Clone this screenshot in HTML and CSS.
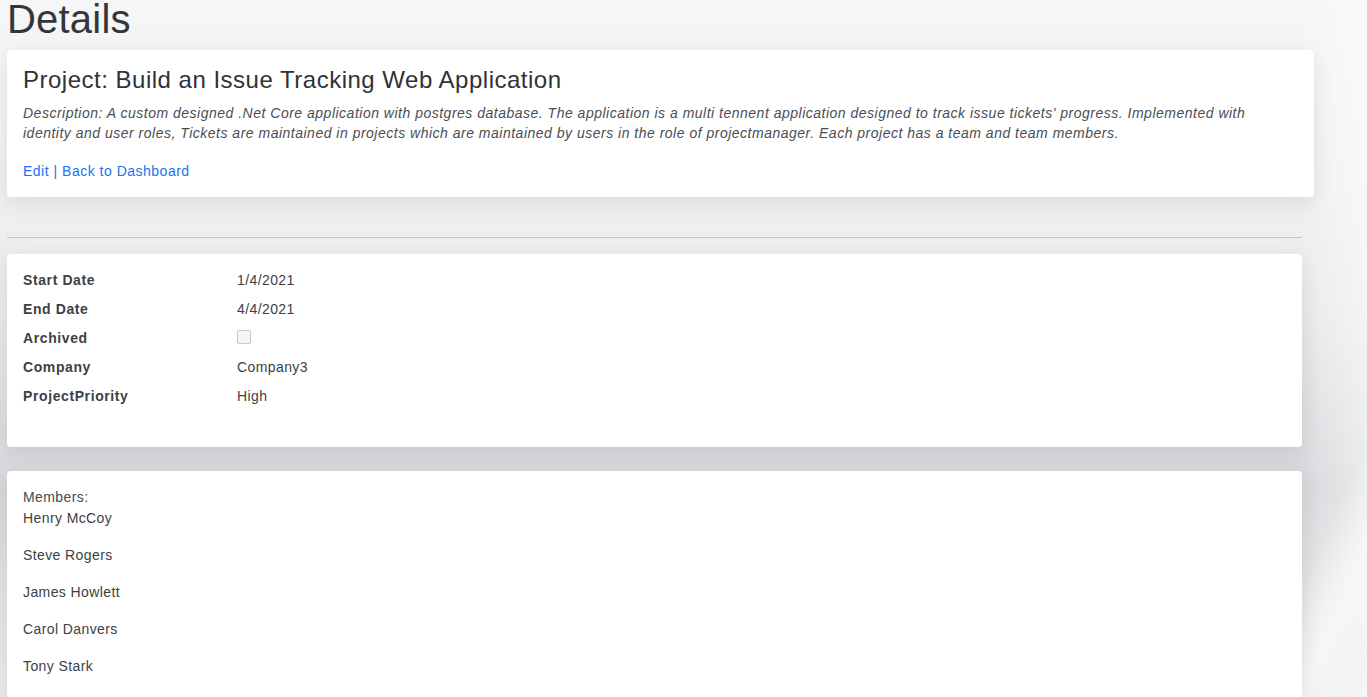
FILE: index.html
```html
<!DOCTYPE html>
<html lang="en">
<head>
<meta charset="utf-8">
<title>Details</title>
<link rel="stylesheet" href="styles.css">
</head>
<body>
<main class="page">
  <h1 class="page-title">Details</h1>

  <section class="card card-wide">
    <h4 class="project-title">Project: Build an Issue Tracking Web Application</h4>
    <p class="project-desc">Description: A custom designed .Net Core application with postgres database. The application is a multi tennent application designed to track issue tickets' progress. Implemented with identity and user roles, Tickets are maintained in projects which are maintained by users in the role of projectmanager. Each project has a team and team members.</p>
    <div class="links"><a href="#">Edit</a> | <a href="#">Back to Dashboard</a></div>
  </section>

  <hr class="divider">

  <section class="card card-details">
    <dl class="details">
      <dt>Start Date</dt><dd>1/4/2021</dd>
      <dt>End Date</dt><dd>4/4/2021</dd>
      <dt>Archived</dt><dd><span class="checkbox"></span></dd>
      <dt>Company</dt><dd>Company3</dd>
      <dt>ProjectPriority</dt><dd>High</dd>
    </dl>
  </section>

  <section class="card card-members">
    <div class="members-label">Members:</div>
    <p class="member">Henry McCoy</p>
    <p class="member">Steve Rogers</p>
    <p class="member">James Howlett</p>
    <p class="member">Carol Danvers</p>
    <p class="member">Tony Stark</p>
  </section>
</main>
</body>
</html>
```

FILE: styles.css
```css
html, body {
  margin: 0;
  padding: 0;
  height: 100%;
  overflow: hidden;
}

body {
  font-family: "Liberation Sans", Arial, sans-serif;
  font-size: 14px;
  line-height: 21px;
  color: #3b3f44;
  letter-spacing: 0.4px;
  background:
    linear-gradient(115deg, rgba(255,255,255,0) 0%, rgba(255,255,255,0) 93%, rgba(255,255,255,0.55) 96%, rgba(255,255,255,0) 99%),
    linear-gradient(90deg, rgba(255,255,255,0) 0%, rgba(255,255,255,0) 95%, rgba(255,255,255,0.5) 100%),
    linear-gradient(180deg, #f6f6f7 0%, #f1f1f2 25%, #e9eaeb 45%, #d8dadd 66%, #d5d7da 70%, #e3e4e6 85%, #ebecee 100%);
}

.page {
  width: 1295px;
  padding-left: 7px;
}

.page-title {
  margin: 0 0 11px;
  font-size: 40px;
  line-height: 39px;
  font-weight: 400;
  color: #33373b;
  letter-spacing: 0.2px;
}

.card {
  background: #fff;
  border-radius: 4px;
  box-shadow: 0 6px 22px rgba(0, 0, 0, 0.09);
  padding: 16px;
}

.card-wide {
  margin-right: -12px;
  padding-bottom: 15px;
}

.project-title {
  margin: 0 0 8px;
  font-size: 24px;
  line-height: 28.8px;
  font-weight: 400;
  color: #2f3338;
  letter-spacing: 0.5px;
}

.project-desc {
  margin: 0 0 18px;
  font-size: 14px;
  line-height: 20px;
  font-style: italic;
  color: #4a4e53;
  letter-spacing: 0.5px;
}

.links {
  color: #1a73f0;
  letter-spacing: 0.5px;
}

.links a {
  color: #1a73f0;
  text-decoration: none;
}

.divider {
  margin: 40px 0 16px;
  border: 0;
  border-top: 1px solid #c4c5c7;
}

.card-details {
  padding-bottom: 16px;
  margin-bottom: 24px;
}

.details {
  display: grid;
  grid-template-columns: 214px 1fr;
  margin: 0 0 16px;
}

.details dt {
  font-weight: 700;
  color: #3d4146;
  letter-spacing: 0.6px;
  margin-bottom: 8px;
}

.details dd {
  margin: 0 0 8px;
  color: #3d4146;
}

.checkbox {
  display: inline-block;
  width: 12px;
  height: 12px;
  border: 1px solid #c9c9c9;
  border-radius: 2px;
  background: #f6f6f6;
  vertical-align: -1px;
  margin-top: -4px;
}

.card-members {
  padding-top: 16px;
  padding-bottom: 60px;
}

.members-label {
  color: #454a52;
}

.member {
  margin: 0 0 16px;
  color: #3d4146;
}
```
